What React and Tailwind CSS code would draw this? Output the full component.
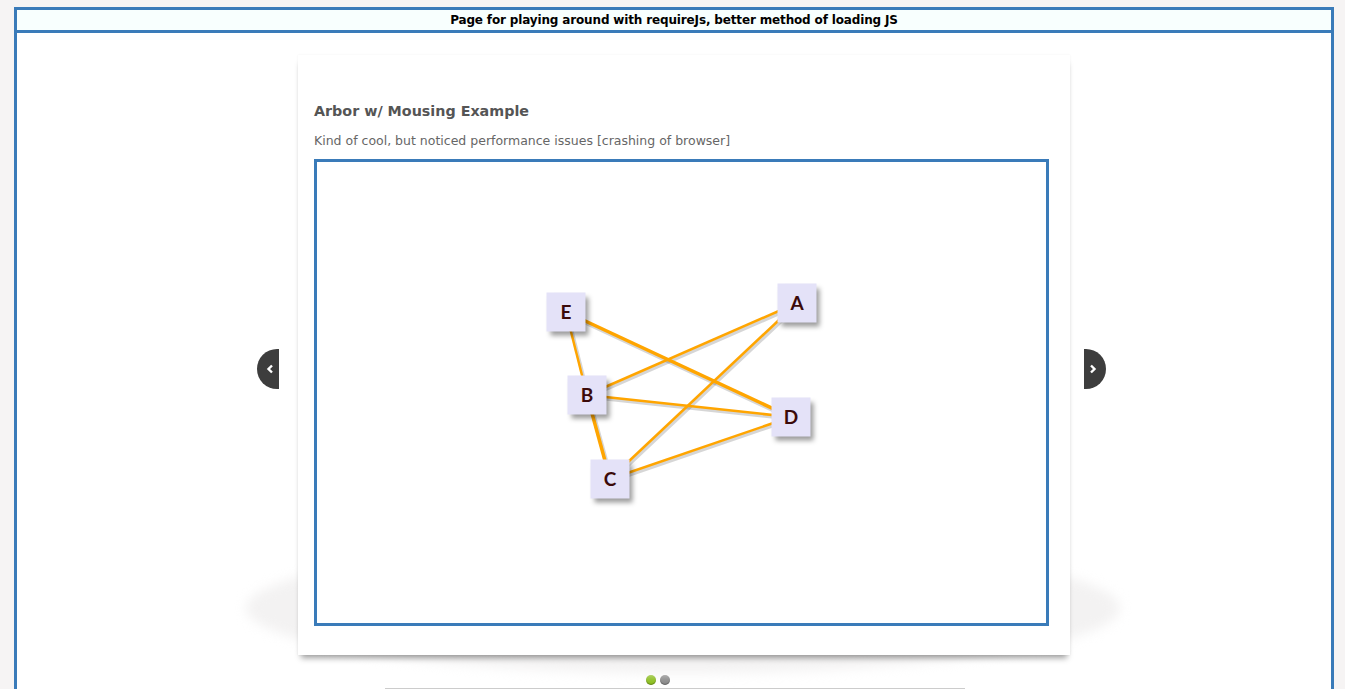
const nodes = [
  { id: 'E', x: 249, y: 150 },
  { id: 'A', x: 480, y: 141 },
  { id: 'B', x: 270, y: 233 },
  { id: 'D', x: 474, y: 255 },
  { id: 'C', x: 293, y: 317 },
]

const edges = [
  ['E', 'B', 2.5],
  ['E', 'D', 3.5],
  ['A', 'B', 2.5],
  ['A', 'C', 2.5],
  ['B', 'D', 2.5],
  ['B', 'C', 3.5],
  ['C', 'D', 2.5],
]

const at = (id) => nodes.find((n) => n.id === id)

function Graph() {
  return (
    <div className="relative h-[461px] w-[729px] bg-white">
      <svg className="absolute inset-0" width="729" height="461">
        {edges.map(([a, b, w]) => (
          <line
            key={a + b + 's'}
            x1={at(a).x + 1.5}
            y1={at(a).y + 2}
            x2={at(b).x + 1.5}
            y2={at(b).y + 2}
            stroke="rgba(0,0,0,0.16)"
            strokeWidth={w + 1}
          />
        ))}
        {edges.map(([a, b, w]) => (
          <line
            key={a + b}
            x1={at(a).x}
            y1={at(a).y}
            x2={at(b).x}
            y2={at(b).y}
            stroke="#ffa500"
            strokeWidth={w}
          />
        ))}
      </svg>
      {nodes.map((n) => (
        <div
          key={n.id}
          className="absolute flex h-[39px] w-[39px] -translate-x-1/2 -translate-y-1/2 items-center justify-center bg-[#e4e2f8] font-[Lato,'DejaVu_Sans',sans-serif] text-[19px] font-bold text-[#3b0a0a] shadow-[3px_4px_5px_rgba(0,0,0,0.4)]"
          style={{ left: n.x, top: n.y }}
        >
          {n.id}
        </div>
      ))}
    </div>
  )
}

function Arrow({ dir }) {
  return (
    <button
      className={[
        'mt-[294px] flex h-[40px] w-[22px] flex-none items-center bg-[#3d3d3d] text-white',
        dir === 'left' ? 'justify-end rounded-l-full pr-[5px]' : 'justify-start rounded-r-full pl-[5px]',
      ].join(' ')}
    >
      <svg width="8" height="10" viewBox="0 0 8 10" fill="none">
        <path
          d={dir === 'left' ? 'M6 1.5L2.5 5L6 8.5' : 'M2 1.5L5.5 5L2 8.5'}
          stroke="currentColor"
          strokeWidth="2.4"
        />
      </svg>
    </button>
  )
}

export default function App() {
  return (
    <div className="min-h-[689px] bg-[#f6f4f4] pl-[14px] pr-[11px] pt-[7px] font-['DejaVu_Sans',Verdana,sans-serif]">
      <div className="h-[682px] overflow-hidden border-[3px] border-b-0 border-[#3a7bb9] bg-white">
        <div className="flex h-[23px] items-center justify-center border-b-[3px] border-[#3a7bb9] bg-[#f8fffe] text-[12px] font-bold tracking-[-0.15px] text-black">
          Page for playing around with requireJs, better method of loading JS
        </div>
        <div className="flex items-start gap-[19px] pl-[240px] pt-[22px]">
          <Arrow dir="left" />
          <div className="relative">
            <div className="absolute -left-[52px] -right-[50px] bottom-[-18px] h-[130px] rounded-[50%] bg-[#f3f2f2] blur-[6px]" />
            <div className="relative w-[772px] bg-white px-[16px] pb-[29px] pt-[47px] shadow-[0_6px_6px_-3px_rgba(0,0,0,0.38),0_0_2px_rgba(0,0,0,0.06)]">
              <h2 className="text-[14.3px] font-bold leading-[18px] text-[#555]">Arbor w/ Mousing Example</h2>
              <p className="mt-[13px] text-[12.5px] leading-[16px] text-[#666]">
                Kind of cool, but noticed performance issues [crashing of browser]
              </p>
              <div className="mt-[10px] w-[735px] border-[3px] border-[#3a7bb9]">
                <Graph />
              </div>
            </div>
          </div>
          <div className="ml-[-5px]">
            <Arrow dir="right" />
          </div>
        </div>
        <div className="mt-[20px] flex justify-center gap-[4px] pr-[32px]">
          <span className="h-[10px] w-[10px] rounded-full bg-[#8cbf1e] shadow-[inset_0_-1px_1px_rgba(0,0,0,0.3)]" />
          <span className="h-[10px] w-[10px] rounded-full bg-[#8a8a8a] shadow-[inset_0_-1px_1px_rgba(0,0,0,0.3)]" />
        </div>
        <div className="ml-[368px] mt-[3px] w-[580px] border-t border-[#ccc]" />
      </div>
    </div>
  )
}
